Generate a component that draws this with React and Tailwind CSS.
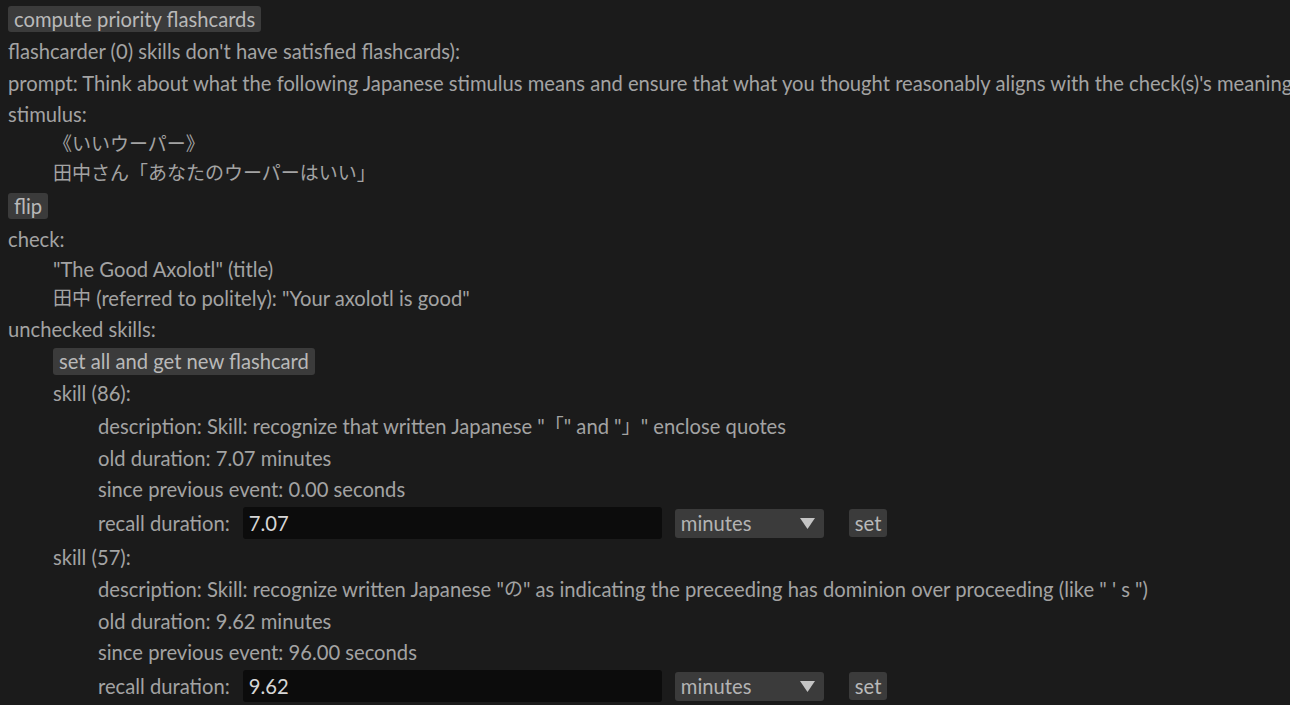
import React from "react";

const FONT = { fontFamily: 'Lato, "Noto Sans CJK JP", sans-serif' };

function Row({ h, indent = 0, children, className = "" }) {
  const pad = indent === 0 ? "pl-[8px]" : indent === 1 ? "pl-[53px]" : "pl-[98px]";
  return (
    <div className={`flex items-center whitespace-nowrap ${pad} ${className}`} style={{ height: h }}>
      {children}
    </div>
  );
}

function J({ children }) {
  return <span className="text-[19px]">{children}</span>;
}

function Btn({ children, className = "" }) {
  return (
    <button className={`bg-[#3b3b3b] text-[#b9b9b9] rounded-[3px] px-[6px] h-[26px] leading-[26px] ${className}`}>
      {children}
    </button>
  );
}

function RecallRow({ h, value }) {
  return (
    <Row h={h} indent={2}>
      <span>recall duration:</span>
      <div className="ml-[13px] w-[419px] h-[32px] bg-[#0c0c0c] rounded-[3px] text-[#d6d6d6] pl-[6px] flex items-center">
        {value}
      </div>
      <div className="ml-[13px] w-[149px] h-[29px] bg-[#3b3b3b] rounded-[3px] text-[#b3b3b3] pl-[6px] pr-[9px] flex items-center justify-between">
        <span>minutes</span>
        <svg width="15" height="11" viewBox="0 0 15 11"><path d="M0 0 L15 0 L7.5 11 Z" fill="#c4c4c4" /></svg>
      </div>
      <Btn className="ml-[25px] h-[28px] leading-[28px]">set</Btn>
    </Row>
  );
}

export default function App() {
  return (
    <div className="bg-[#1b1b1b] text-[#a3a3a3] text-[20.2px] w-[1290px] h-[705px] overflow-hidden" style={FONT}>
      <div className="flex items-start pl-[8px] pt-[6px]" style={{ height: 35 }}>
        <Btn>compute priority flashcards</Btn>
      </div>
      <Row h={32}>flashcarder (0) skills don't have satisfied flashcards):</Row>
      <Row h={32}>prompt: Think about what the following Japanese stimulus means and ensure that what you thought reasonably aligns with the check(s)'s meaning</Row>
      <Row h={30}>stimulus:</Row>
      <Row h={30} indent={1}><J>《いいウーパー》</J></Row>
      <Row h={29} indent={1}><J>田中さん「あなたのウーパーはいい」</J></Row>
      <Row h={35}><Btn>flip</Btn></Row>
      <Row h={32}>check:</Row>
      <Row h={29} indent={1}>"The Good Axolotl" (title)</Row>
      <Row h={29} indent={1}><J>田中</J>&nbsp;(referred to politely): "Your axolotl is good"</Row>
      <Row h={32}>unchecked skills:</Row>
      <Row h={32} indent={1}><Btn className="h-[27px]">set all and get new flashcard</Btn></Row>
      <Row h={33} indent={1}>skill (86):</Row>
      <Row h={32} indent={2}>description: Skill: recognize that written Japanese "<J>「</J>" and "<J>」</J>" enclose quotes</Row>
      <Row h={32} indent={2}>old duration: 7.07 minutes</Row>
      <Row h={31} indent={2}>since previous event: 0.00 seconds</Row>
      <RecallRow h={36} value="7.07" />
      <Row h={32} indent={1}>skill (57):</Row>
      <Row h={32} indent={2}>description: Skill: recognize written Japanese "<J>の</J>" as indicating the preceeding has dominion over proceeding (like " ' s ")</Row>
      <Row h={32} indent={2}>old duration: 9.62 minutes</Row>
      <Row h={31} indent={2}>since previous event: 96.00 seconds</Row>
      <RecallRow h={36} value="9.62" />
    </div>
  );
}
